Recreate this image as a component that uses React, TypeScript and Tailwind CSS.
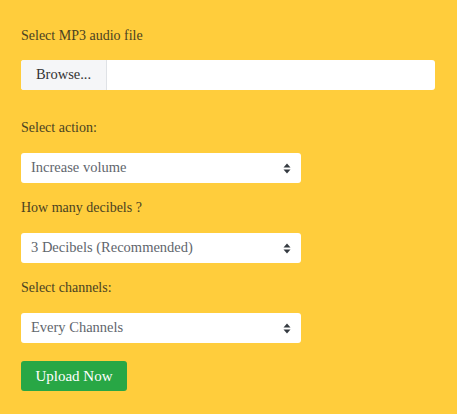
import React from 'react';

const font = { fontFamily: '"Liberation Serif", serif' };

const Arrows: React.FC = () => (
  <svg width="8" height="11" viewBox="0 0 8 11" className="shrink-0">
    <path d="M4 0.5 L7.5 4.5 H0.5 Z" fill="#343a40" />
    <path d="M4 10.5 L7.5 6.5 H0.5 Z" fill="#343a40" />
  </svg>
);

const FakeSelect: React.FC<{ value: string }> = ({ value }) => (
  <div className="w-[280px] h-[30px] bg-white rounded-[3px] flex items-center justify-between pl-[10px] pr-[10px] text-[14.5px] text-[#5f666d]">
    <span>{value}</span>
    <Arrows />
  </div>
);

const App: React.FC = () => {
  return (
    <div className="w-[457px] h-[414px] bg-[#ffcd3c] px-[21px] pt-[27px] text-[#4a4222]" style={font}>
      <p className="text-[14px] leading-[18px]">Select MP3 audio file</p>
      <div className="mt-[15px] w-[414px] h-[30px] bg-white rounded-[3px] flex overflow-hidden">
        <div className="w-[86px] h-full bg-[#f5f6f8] border-r border-[#dfe2e6] flex items-center justify-center text-[14.5px] text-[#333]">
          Browse...
        </div>
      </div>
      <p className="mt-[29px] text-[14px] leading-[18px]">Select action:</p>
      <div className="mt-[16px]">
        <FakeSelect value="Increase volume" />
      </div>
      <p className="mt-[16px] text-[14px] leading-[18px]">How many decibels ?</p>
      <div className="mt-[16px]">
        <FakeSelect value="3 Decibels (Recommended)" />
      </div>
      <p className="mt-[16px] text-[14px] leading-[18px]">Select channels:</p>
      <div className="mt-[16px]">
        <FakeSelect value="Every Channels" />
      </div>
      <button className="mt-[18px] w-[106px] h-[30px] bg-[#28a745] text-white rounded-[3px] text-[15px]">
        Upload Now
      </button>
    </div>
  );
};

export default App;
